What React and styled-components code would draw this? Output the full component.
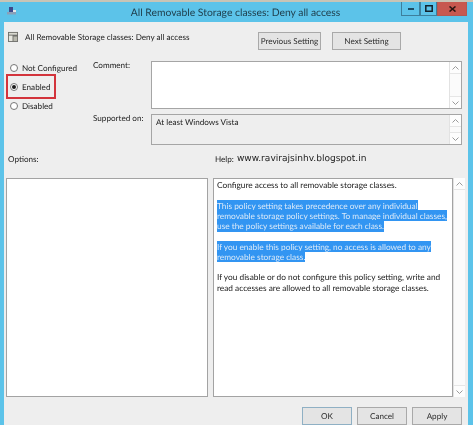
import React from 'react'
import styled, { createGlobalStyle } from 'styled-components'

const Global = createGlobalStyle`
  html, body { margin: 0; padding: 0; background: #fff; }
  body {
    font-family: Lato, "Liberation Sans", sans-serif;
    color: #1c1c1c;
    text-rendering: geometricPrecision;
  }
`
const Window = styled.div`
  width: 473px;
  height: 425px;
  box-sizing: border-box;
  border-top: 2px solid #c8c4b6;
  background: #5cc3e9;
  display: flex;
  flex-direction: column;
  overflow: hidden;
  filter: blur(0.3px);
`
const TitleBar = styled.div`
  height: 20px;
  flex: none;
  position: relative;
  display: flex;
  align-items: center;
  justify-content: center;
  font-size: 10.35px;
  color: #1f3d4a;
  padding: 1px 2px 0 0;
  box-sizing: border-box;
`
const AppIcon = styled.svg`
  position: absolute;
  left: 6px;
  top: 4px;
`
const WinButtons = styled.div`
  position: absolute;
  left: 401px;
  top: 0;
  display: flex;
  height: 14px;
`
const WinButton = styled.div`
  width: ${p => p.$w}px;
  height: 14px;
  box-sizing: border-box;
  display: flex;
  align-items: center;
  justify-content: center;
  background: ${p => p.$bg};
  border: 1px solid ${p => p.$line};
  border-top: none;
`
const Body = styled.div`
  flex: 1;
  margin: 0 5px 0 4px;
  background: #eeeeee;
  box-sizing: border-box;
  padding: 10px 3px 0 3px;
  display: flex;
  flex-direction: column;
`
const HeaderRow = styled.div`
  display: flex;
  height: 18px;
  margin-bottom: 11px;
`
const PolicyName = styled.div`
  display: flex;
  align-items: center;
  gap: 7px;
  font-size: 8.15px;
  margin-left: 1px;
  width: 250px;
  padding-bottom: 9px;
  box-sizing: border-box;
`
const Button = styled.div`
  width: ${p => p.$w}px;
  height: 18px;
  margin-right: ${p => p.$gap || 0}px;
  box-sizing: border-box;
  border: 1px solid ${p => p.$line || '#a9a9a9'};
  background: #e4e4e4;
  display: flex;
  align-items: center;
  justify-content: center;
  font-size: 8.15px;
  white-space: nowrap;
  color: #2c2c2c;
`
const SettingsRow = styled.div`
  display: flex;
  height: 84px;
`
const RadioColumn = styled.div`
  width: 86px;
  flex: none;
  display: flex;
  flex-direction: column;
  margin-top: -3px;
`
const RadioRow = styled.div`
  height: 19px;
  display: flex;
  align-items: center;
  gap: 4px;
  padding-left: 3px;
  font-size: 8.15px;
  white-space: nowrap;
  box-sizing: border-box;
  ${p => p.$marked && `
    outline: 2px solid #d3343c;
    outline-offset: 1px;
    width: 44px;
    margin-left: 2px;
    padding-left: 1px;
  `}
`
const RadioCircle = styled.span`
  width: 8px;
  height: 8px;
  flex: none;
  box-sizing: border-box;
  border-radius: 50%;
  border: 1px solid #777;
  background: #fff;
  display: flex;
  align-items: center;
  justify-content: center;
  &::after {
    content: '';
    width: 4px;
    height: 4px;
    border-radius: 50%;
    background: ${p => (p.$on ? '#1a1a1a' : 'transparent')};
  }
`
const FieldColumn = styled.div`
  flex: 1;
  display: flex;
  flex-direction: column;
  gap: 5px;
`
const Field = styled.div`
  display: flex;
  height: ${p => p.$h}px;
  flex: none;
`
const FieldLabel = styled.div`
  width: 58px;
  flex: none;
  font-size: 8.15px;
  line-height: 8px;
  white-space: nowrap;
`
const FieldBox = styled.div`
  width: 311px;
  box-sizing: border-box;
  border: 1px solid #a5a5a5;
  background: ${p => p.$bg};
  display: flex;
  justify-content: space-between;
  font-size: 8.15px;
  padding-left: 4px;
  line-height: 14px;
`
const ScrollBar = styled.div`
  width: 12px;
  flex: none;
  display: flex;
  flex-direction: column;
  justify-content: space-between;
  background: #fbfbfb;
  border-left: 1px solid #e2e2e2;
  box-sizing: border-box;
`
const ScrollArrow = styled.div`
  height: 11px;
  display: flex;
  align-items: center;
  justify-content: center;
  border-bottom: ${p => (p.$top ? '1px solid #e6e6e6' : 'none')};
  border-top: ${p => (p.$top ? 'none' : '1px solid #e6e6e6')};
  background: #fdfdfd;
`
const LabelsRow = styled.div`
  display: flex;
  align-items: center;
  height: 14px;
  margin-top: 7px;
  margin-bottom: 12px;
  font-size: 8.15px;
  padding-left: 1px;
`
const OptionsLabel = styled.div`
  width: 207px;
`
const Watermark = styled.span`
  font-family: "DejaVu Sans", sans-serif;
  font-size: 9.05px;
  color: #1c1c1c;
  margin-left: 3px;
`
const PanesRow = styled.div`
  display: flex;
  height: 219px;
  margin-left: -1px;
`
const OptionsPane = styled.div`
  width: 202px;
  flex: none;
  box-sizing: border-box;
  background: #fff;
  border: 1px solid #a3a3a3;
  margin-right: 5px;
`
const HelpPane = styled.div`
  width: 240px;
  flex: none;
  box-sizing: border-box;
  background: #fff;
  border: 1px solid #a3a3a3;
  padding: 1px 3px;
  font-size: 8.3px;
  line-height: 10.25px;
  white-space: nowrap;
  color: #202020;
`
const Gap = styled.div`
  height: 10.25px;
`
const Mark = styled.span`
  background: #3295f2;
  color: #dbeaf9;
  padding: 0.6px 0;
`
const FooterRow = styled.div`
  display: flex;
  justify-content: flex-end;
  gap: 5px;
  margin-top: 10px;
  padding-right: 3px;
`

const UpArrow = () => (
  <svg width="7" height="4" viewBox="0 0 7 4" fill="none" stroke="#9a9a9a">
    <path d="M.5 3.5l3-3 3 3" />
  </svg>
)
const DownArrow = () => (
  <svg width="7" height="4" viewBox="0 0 7 4" fill="none" stroke="#9a9a9a">
    <path d="M.5 .5l3 3 3-3" />
  </svg>
)
const Scroll = () => (
  <ScrollBar>
    <ScrollArrow $top><UpArrow /></ScrollArrow>
    <ScrollArrow><DownArrow /></ScrollArrow>
  </ScrollBar>
)

export default function App() {
  return (
    <>
      <Global />
      <Window>
        <TitleBar>
          <AppIcon width="12" height="10" viewBox="0 0 12 10">
            <path d="M3 1h4v5H3z" fill="#3c4a8c" />
            <path d="M1 6h9v2.500H1z" fill="#8aa0b8" />
            <path d="M7 4h3v2H7z" fill="#e8e8e8" />
          </AppIcon>
          All Removable Storage classes: Deny all access
          <WinButtons>
            <WinButton $w={19} $bg="#5cc3e9" $line="#3d7f9c">
              <svg width="6" height="3"><path d="M0 1h6v2H0z" fill="#1f4d63" /></svg>
            </WinButton>
            <WinButton $w={17} $bg="#5cc3e9" $line="#3d7f9c">
              <svg width="8" height="7" fill="none" stroke="#12222c" strokeWidth="1.5"><path d="M.8 .8h6.4v5.4H.8z" /></svg>
            </WinButton>
            <WinButton $w={30} $bg="#c7584f" $line="#b5574f">
              <svg width="7" height="6" fill="none" stroke="#2a1512" strokeWidth="1.6"><path d="M.5 .5l6 5M6.500 .5l-6 5" /></svg>
            </WinButton>
          </WinButtons>
        </TitleBar>
        <Body>
          <HeaderRow>
            <PolicyName>
              <svg width="10" height="11" viewBox="0 0 11 12">
                <path d="M0 1h11v11H0z" fill="#6f6f6a" />
                <path d="M1 2h9v2H1z" fill="#d9d9d0" />
                <path d="M1 5h4v6H1z" fill="#e6e6de" />
                <path d="M6 6h4v5H6z" fill="#b9b9ae" />
              </svg>
              All Removable Storage classes: Deny all access
            </PolicyName>
            <Button $w={63} $gap={11}>Previous Setting</Button>
            <Button $w={69}>Next Setting</Button>
          </HeaderRow>
          <SettingsRow>
            <RadioColumn>
              <RadioRow><RadioCircle />Not Configured</RadioRow>
              <RadioRow $marked><RadioCircle $on />Enabled</RadioRow>
              <RadioRow><RadioCircle />Disabled</RadioRow>
            </RadioColumn>
            <FieldColumn>
              <Field $h={48}>
                <FieldLabel>Comment:</FieldLabel>
                <FieldBox $bg="#fff"><span /><Scroll /></FieldBox>
              </Field>
              <Field $h={31}>
                <FieldLabel>Supported on:</FieldLabel>
                <FieldBox $bg="#eeeeee">At least Windows Vista<Scroll /></FieldBox>
              </Field>
            </FieldColumn>
          </SettingsRow>
          <LabelsRow>
            <OptionsLabel>Options:</OptionsLabel>
            Help:<Watermark>www.ravirajsinhv.blogspot.in</Watermark>
          </LabelsRow>
          <PanesRow>
            <OptionsPane />
            <HelpPane>
              Configure access to all removable storage classes.
              <Gap />
              <Mark>This policy setting takes precedence over any individual</Mark><br />
              <Mark>removable storage policy settings. To manage individual classes,</Mark><br />
              <Mark>use the policy settings available for each class.</Mark>
              <Gap />
              <Mark>If you enable this policy setting, no access is allowed to any</Mark><br />
              <Mark>removable storage class.</Mark>
              <Gap />
              If you disable or do not configure this policy setting, write and<br />
              read accesses are allowed to all removable storage classes.
            </HelpPane>
            <Scroll />
          </PanesRow>
          <FooterRow>
            <Button $w={50} $line="#8fb0c4">OK</Button>
            <Button $w={50}>Cancel</Button>
            <Button $w={50}>Apply</Button>
          </FooterRow>
        </Body>
      </Window>
    </>
  )
}
